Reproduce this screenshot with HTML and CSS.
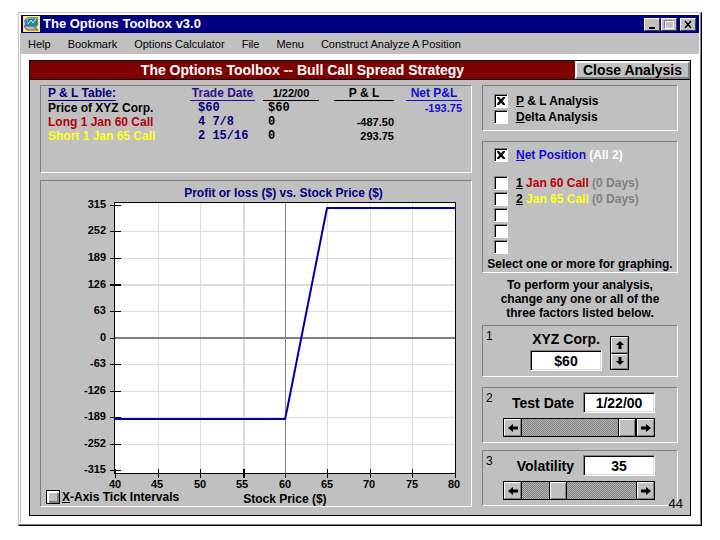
FILE: index.html
```html
<!DOCTYPE html>
<html lang="en">
<head>
    <meta charset="UTF-8">
    <meta name="viewport" content="width=device-width, initial-scale=1.0">
    <title>The Options Toolbox v3.0</title>
    <link rel="stylesheet" href="styles.css">
</head>
<body>

    <div class="window">
        <header class="titlebar">
            <svg class="app-icon" width="17" height="16" viewBox="0 0 17 16">
                <rect width="17" height="16" fill="#f4ee6a"/>
                <path d="M1 4l4-3h10v8l-2 3H2z" fill="#8a97a8"/>
                <path d="M5 3h9v7H4z" fill="#1c8f9c"/>
                <path d="M5 8l3-4 2 3 3-4" fill="none" stroke="#bdeff2"/>
                <path d="M1 10h9l5 4H4z" fill="#b9b9c4" stroke="#5a5a78"/>
                <path d="M3 4v6M14 3v6" stroke="#5050a0"/>
            </svg>
            <h1 class="title">The Options Toolbox v3.0</h1>
            <button class="win-btn" aria-label="Minimize"><svg width="12" height="9" viewBox="0 0 12 9"><path d="M3 7h6v2H3z"/></svg></button>
            <button class="win-btn" aria-label="Maximize"><svg width="12" height="9" viewBox="0 0 12 9"><path d="M2.500 1.500h8v7h-8z" fill="none" stroke="#fff"/><path d="M1.500 8V.5h8" fill="none" stroke="#808080"/></svg></button>
            <button class="win-btn win-close" aria-label="Close"><svg width="12" height="9" viewBox="0 0 12 9"><path d="M3 1l6 7M9 1L3 8" fill="none" stroke="#000" stroke-width="1.4"/></svg></button>
        </header>

        <nav class="menubar">
            <button>Help</button>
            <button>Bookmark</button>
            <button>Options Calculator</button>
            <button>File</button>
            <button>Menu</button>
            <button>Construct Analyze A Position</button>
        </nav>

        <main class="client">
            <div class="panel">
                <div class="panel-head">
                    <h2>The Options Toolbox -- Bull Call Spread Strategy</h2>
                    <button class="close-analysis">Close Analysis</button>
                </div>

                <div class="panel-body">
                    <div class="left">
                        <section class="box pl-box">
                            <table class="pl-table">
                                <colgroup>
                                    <col class="c-name"><col class="c-trade"><col class="c-test"><col class="c-pl"><col class="c-net">
                                </colgroup>
                                <thead>
                                    <tr>
                                        <th class="navy"><span>P &amp; L Table:</span></th>
                                        <th class="purple"><span class="w-trade">Trade Date</span></th>
                                        <th><span class="w-test small">1/22/00</span></th>
                                        <th><span class="w-pl">P &amp; L</span></th>
                                        <th class="right blue"><span class="w-net">Net P&amp;L</span></th>
                                    </tr>
                                </thead>
                                <tbody>
                                    <tr>
                                        <td>Price of XYZ Corp.</td>
                                        <td class="mono trade">$60</td>
                                        <td class="mono test">$60</td>
                                        <td></td>
                                        <td class="right small blue">-193.75</td>
                                    </tr>
                                    <tr>
                                        <td class="red">Long 1 Jan 60 Call</td>
                                        <td class="mono trade">4 7/8</td>
                                        <td class="mono test">0</td>
                                        <td class="right small">-487.50</td>
                                        <td></td>
                                    </tr>
                                    <tr>
                                        <td class="yellow">Short 1 Jan 65 Call</td>
                                        <td class="mono trade">2 15/16</td>
                                        <td class="mono test">0</td>
                                        <td class="right small">293.75</td>
                                        <td></td>
                                    </tr>
                                </tbody>
                            </table>
                        </section>

                        <section class="box graph-box">
                            <h3>Profit or loss ($) vs. Stock Price ($)</h3>
                            <svg class="chart" viewBox="0 0 430 290" role="img" aria-label="Profit or loss by stock price">
                                <rect x="73.5" y="2.5" width="341" height="271" fill="#fff"/>
                                <!-- grid -->
                                <path class="grid" d="M117.500 3v270M159.500 3v270M286.500 3v270M329.500 3v270M371.500 3v270"/>
                                <path class="grid" d="M74 31.500h340M74 58.500h340M74 111.500h340M74 164.500h340M74 191.500h340M74 217.500h340M74 244.500h340"/>
                                <path class="grid thick" d="M203 3v270M74 85h340"/>
                                <path class="zero" d="M244.500 3v270"/>
                                <path class="zero thick" d="M74 138h340"/>
                                <!-- frame and ticks -->
                                <rect class="axis" x="73.500" y="2.500" width="341" height="271"/>
                                <path class="axis" d="M69 5.500h11M69 31.500h11M69 58.500h11M69 111.500h11M69 138.500h5M69 164.500h11M69 191.500h11M69 217.500h11M69 244.500h11M69 270.500h11"/>
                                <path class="axis thick" d="M69 85h11"/>
                                <path class="axis" d="M74.500 269v9M117.500 269v9M159.500 269v9M244.500 274v4M286.500 269v9M329.500 269v9M371.500 269v9M414.500 269v9"/>
                                <path class="axis thick" d="M203 269v9"/>
                                <path class="payoff" d="M74 219H244L246 210L286 8H415"/>
                                <g class="y-labels">
                                    <text x="65" y="8">315</text>
                                    <text x="65" y="34">252</text>
                                    <text x="65" y="61">189</text>
                                    <text x="65" y="88">126</text>
                                    <text x="65" y="114">63</text>
                                    <text x="65" y="141">0</text>
                                    <text x="65" y="167">-63</text>
                                    <text x="65" y="194">-126</text>
                                    <text x="65" y="220">-189</text>
                                    <text x="65" y="247">-252</text>
                                    <text x="65" y="273">-315</text>
                                </g>
                                <g class="x-labels">
                                    <text x="74" y="288">40</text>
                                    <text x="116" y="288">45</text>
                                    <text x="159" y="288">50</text>
                                    <text x="201" y="288">55</text>
                                    <text x="244" y="288">60</text>
                                    <text x="286" y="288">65</text>
                                    <text x="328" y="288">70</text>
                                    <text x="371" y="288">75</text>
                                    <text x="413" y="288">80</text>
                                </g>
                            </svg>
                            <div class="graph-foot">
                                <label class="check"><input type="checkbox" class="raised"><span><u>X</u>-Axis Tick Intervals</span></label>
                                <span class="axis-name">Stock Price ($)</span>
                            </div>
                        </section>
                    </div>

                    <div class="right-col">
                        <section class="box analysis-box">
                            <label class="check"><input type="checkbox" checked><span><u>P</u> &amp; L Analysis</span></label>
                            <label class="check"><input type="checkbox"><span><u>D</u>elta Analysis</span></label>
                        </section>

                        <section class="box position-box">
                            <label class="check net"><input type="checkbox" checked><span class="blue"><u>N</u>et Position <span class="white">(All 2)</span></span></label>
                            <label class="check"><input type="checkbox"><span><u>1</u> <span class="red">Jan 60 Call</span> <span class="gray">(0 Days)</span></span></label>
                            <label class="check"><input type="checkbox"><span><u>2</u> <span class="yellow">Jan 65 Call</span> <span class="gray">(0 Days)</span></span></label>
                            <div class="check"><input type="checkbox" aria-label="Position 3"></div>
                            <div class="check"><input type="checkbox" aria-label="Position 4"></div>
                            <div class="check"><input type="checkbox" aria-label="Position 5"></div>
                            <p>Select one or more for graphing.</p>
                        </section>

                        <p class="hint">To perform your analysis,<br>change any one or all of the<br>three factors listed below.</p>

                        <section class="box factor price">
                            <span class="num">1</span>
                            <div class="stack">
                                <label for="price">XYZ Corp.</label>
                                <input type="text" id="price" value="$60">
                            </div>
                            <div class="spinner">
                                <button class="arrow" aria-label="Price up"><svg width="10" height="10" viewBox="0 0 10 10"><path d="M5 1l4 4H6.500v4h-3V5H1z"/></svg></button>
                                <button class="arrow" aria-label="Price down"><svg width="10" height="10" viewBox="0 0 10 10"><path d="M5 9L1 5h2.500V1h3v4H9z"/></svg></button>
                            </div>
                        </section>

                        <section class="box factor">
                            <span class="num">2</span>
                            <div class="field">
                                <label for="date">Test Date</label>
                                <input type="text" id="date" value="1/22/00">
                            </div>
                            <div class="scroll">
                                <button class="arrow" aria-label="Earlier date"><svg width="12" height="10" viewBox="0 0 12 10"><path d="M1 5l5-4v2.500h5v3H6V9z"/></svg></button>
                                <input type="range" min="0" max="100" value="100" aria-label="Test date">
                                <button class="arrow" aria-label="Later date"><svg width="12" height="10" viewBox="0 0 12 10"><path d="M11 5L6 1v2.500H1v3h5V9z"/></svg></button>
                            </div>
                        </section>

                        <section class="box factor last">
                            <span class="num">3</span>
                            <div class="field">
                                <label for="vol">Volatility</label>
                                <input type="text" id="vol" value="35">
                            </div>
                            <div class="scroll">
                                <button class="arrow" aria-label="Lower volatility"><svg width="12" height="10" viewBox="0 0 12 10"><path d="M1 5l5-4v2.500h5v3H6V9z"/></svg></button>
                                <input type="range" min="5" max="110" value="35" aria-label="Volatility">
                                <button class="arrow" aria-label="Higher volatility"><svg width="12" height="10" viewBox="0 0 12 10"><path d="M11 5L6 1v2.500H1v3h5V9z"/></svg></button>
                            </div>
                        </section>
                    </div>
                </div>
                <span class="page-no">44</span>
            </div>
        </main>
    </div>

</body>
</html>
```

FILE: styles.css
```css
* {
    box-sizing: border-box;
}
body {
    margin: 0;
    padding: 12px 18px;
    background: #fff;
    color: #000;
    font: bold 12px/14px "Liberation Sans", Arial, sans-serif;
}
h1, h2, h3, p {
    margin: 0;
    font-size: inherit;
}
button, input {
    margin: 0;
    padding: 0;
    color: inherit;
    font: inherit;
}

/* window frame */
.window {
    padding: 2px;
    border: 1px solid;
    border-color: #c0c0c0 #000 #000 #c0c0c0;
    box-shadow: inset -1px -1px #808080;
}
.titlebar {
    display: flex;
    align-items: center;
    height: 18px;
    padding: 0 3px 0 2px;
    background: #000080;
    color: #fff;
}
.title {
    flex: 1;
    margin-left: 3px;
    font-size: 13px;
}
.win-btn {
    display: flex;
    width: 16px;
    height: 13px;
    margin-left: 1px;
    border: 1px solid;
    border-color: #fff #404040 #404040 #fff;
    background: #c0c0c0;
    align-items: center;
    justify-content: center;
}
.win-close {
    margin-left: 3px;
}
.menubar {
    display: flex;
    gap: 17px;
    height: 21px;
    padding: 0 7px;
    background: #c0c0c0;
    box-shadow: -1px 0 #c0c0c0;
}
.menubar button {
    border: none;
    background: none;
    font-size: 11px;
    font-weight: normal;
}
.client {
    padding: 6px 8px 7px;
    box-shadow: -1px 0 #c0c0c0;
}

/* analysis panel */
.panel {
    position: relative;
    border: 1px solid #000;
    background: #c0c0c0;
}
.panel-head {
    display: flex;
    height: 19px;
    border-bottom: 1px solid #000;
    background: #800000;
}
.panel-head h2 {
    flex: 1;
    color: #fff;
    font-size: 14px;
    line-height: 18px;
    text-align: center;
}
.close-analysis {
    width: 115px;
    border: 2px solid;
    border-color: #fff #808080 #808080 #fff;
    background: #c0c0c0;
    font-size: 14px;
    line-height: 14px;
}
.panel-body {
    display: grid;
    grid-template-columns: 1fr 196px;
    gap: 10px;
    padding: 5px 12px 8px 10px;
}
.left {
    display: flex;
    flex-direction: column;
    gap: 7px;
}
.box {
    border: 1px solid;
    border-color: #808080 #fff #fff #808080;
}

/* P & L table */
.pl-box {
    padding: 1px 7px 29px;
}
.pl-table {
    width: 414px;
    table-layout: fixed;
    border-collapse: collapse;
}
.c-name { width: 142px; }
.c-trade { width: 73px; }
.c-test { width: 71px; }
.c-pl { width: 60px; }
.c-net { width: 68px; }
.pl-table th, .pl-table td {
    height: 14px;
    padding: 0;
    text-align: left;
    white-space: nowrap;
}
.pl-table th {
    vertical-align: top;
}
.pl-table th span {
    display: block;
    width: fit-content;
    border-bottom: 1px solid;
    line-height: 13px;
    text-align: center;
}
.pl-table .w-trade { width: 65px; }
.pl-table .w-test { width: 56px; }
.pl-table .w-pl { width: 60px; }
.pl-table .w-net {
    width: 56px;
    margin-left: auto;
}
.pl-table .right { text-align: right; }
.pl-table .trade {
    padding-left: 8px;
    color: #000080;
}
.pl-table .test { padding-left: 5px; }
.mono { font-family: "Liberation Mono", "Courier New", monospace; }
.small { font-size: 11px; }

.navy { color: #000080; }
.purple { color: #30108c; }
.blue { color: #1010d0; }
.red { color: #b80008; }
.yellow { color: #ffff18; }
.white { color: #fff; }
.gray { color: #808080; }

/* graph */
.graph-box {
    flex: 1;
    padding-top: 5px;
}
.graph-box h3 {
    padding-left: 55px;
    color: #000080;
    text-align: center;
}
.chart {
    display: block;
    width: 100%;
    overflow: visible;
    font-size: 11px;
}
.grid {
    fill: none;
    stroke: #dcdcdc;
}
.zero { stroke: #808080; }
.axis {
    fill: none;
    stroke: #000;
}
.payoff {
    fill: none;
    stroke: #0000a8;
    stroke-width: 2;
}
.thick { stroke-width: 2; }
.y-labels { text-anchor: end; }
.x-labels { text-anchor: middle; }
.graph-foot {
    display: flex;
    gap: 64px;
    padding-left: 5px;
}
.graph-foot .check {
    gap: 2px;
    height: 14px;
    padding: 0;
}
.axis-name {
    padding-top: 2px;
}

/* check boxes */
.check {
    display: flex;
    align-items: center;
    gap: 8px;
    height: 16px;
    padding-left: 11px;
    white-space: nowrap;
}
input[type="checkbox"] {
    appearance: none;
    width: 14px;
    height: 14px;
    border: 1px solid;
    border-color: #808080 #fff #fff #808080;
    background: #fff;
    box-shadow: inset 1px 1px #000;
}
input[type="checkbox"]:checked::before {
    content: "";
    display: block;
    width: 8px;
    height: 8px;
    margin: 2px;
    background: #000;
    clip-path: polygon(0 0, 25% 0, 50% 28%, 75% 0, 100% 0, 100% 14%, 70% 50%, 100% 86%, 100% 100%, 75% 100%, 50% 72%, 25% 100%, 0 100%, 0 86%, 30% 50%, 0 14%);
}
input[type="checkbox"].raised {
    border-color: #000;
    background: #c0c0c0;
    box-shadow: inset 2px 2px #fff, inset -2px -2px #808080;
}

/* right column */
.analysis-box {
    margin-bottom: 10px;
    padding: 7px 0 5px;
}
.position-box {
    padding: 5px 0 1px;
}
.position-box .net {
    margin-bottom: 12px;
}
.position-box p {
    margin-top: 2px;
    text-align: center;
}
.hint {
    margin: 5px 0;
    text-align: center;
}
.factor {
    position: relative;
    margin-bottom: 10px;
    padding: 4px 22px 5px 20px;
    font-size: 14px;
}
.factor.last {
    margin: -3px 0 0;
}
.num {
    position: absolute;
    top: 3px;
    left: 3px;
    font-size: 12px;
    font-weight: normal;
}
.factor input[type="text"] {
    width: 72px;
    height: 21px;
    border: 1px solid;
    border-color: #808080 #fff #fff #808080;
    background: #fff;
    box-shadow: inset 1px 1px #000, inset -1px -1px #dcdcdc;
    text-align: center;
}
.price {
    display: flex;
    gap: 8px;
    padding-left: 47px;
}
.stack {
    display: flex;
    flex-direction: column;
    gap: 2px;
    line-height: 18px;
    text-align: center;
}
.spinner {
    align-self: flex-end;
    margin-bottom: 1px;
    border: 1px solid #000;
}
.spinner .arrow {
    height: 16px;
}
.spinner .arrow + .arrow {
    border-top: 1px solid #000;
    box-shadow: inset 0 1px #fff;
}
.arrow {
    display: flex;
    align-items: center;
    justify-content: center;
    width: 17px;
    height: 17px;
    border: 1px solid;
    border-color: #fff #808080 #808080 #fff;
    background: #c0c0c0;
}
.field {
    display: flex;
    align-items: center;
    justify-content: flex-end;
    gap: 9px;
    margin-bottom: 5px;
}
.scroll {
    display: flex;
    height: 19px;
    border: 1px solid #000;
}
.scroll input {
    appearance: none;
    flex: 1;
    min-width: 0;
    height: 17px;
    border: solid #000;
    border-width: 0 1px;
    background: repeating-conic-gradient(#808080 0 25%, #b4b4b4 0 50%) 0 0 / 2px 2px;
}
.scroll input::-webkit-slider-thumb {
    appearance: none;
    width: 18px;
    height: 17px;
    border: 1px solid #000;
    border-width: 0 1px;
    background: #c0c0c0;
    box-shadow: inset 1px 1px #fff, inset -1px -1px #808080;
}
.page-no {
    position: absolute;
    right: 7px;
    bottom: 4px;
    font-size: 13px;
    font-weight: normal;
}
```
